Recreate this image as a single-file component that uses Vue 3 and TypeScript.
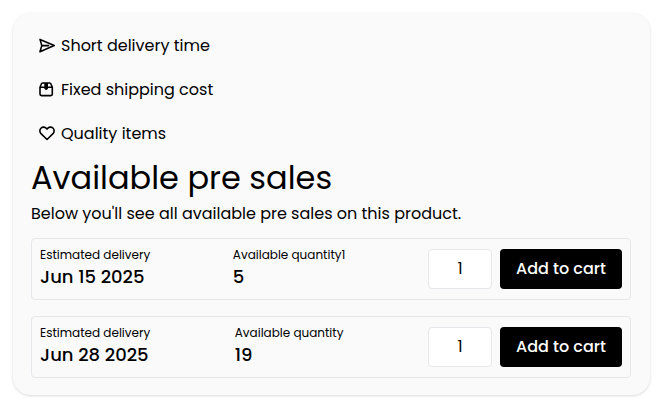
<script setup lang="ts">
import { ref } from 'vue'

interface PreSale {
  id: number
  date: string
  quantityLabel: string
  available: number
  amount: number
}

const preSales = ref<PreSale[]>([
  { id: 1, date: 'Jun 15 2025', quantityLabel: 'Available quantity1', available: 5, amount: 1 },
  { id: 2, date: 'Jun 28 2025', quantityLabel: 'Available quantity', available: 19, amount: 1 },
])
</script>

<template>
  <main class="page">
    <section class="card">
      <ul class="perks">
        <li class="perk">
          <svg class="icon" viewBox="0 0 16 16" aria-hidden="true">
            <path d="M1 1.4 15.2 7.6 1 13.8 2.8 7.6Z" />
            <path d="M2.8 7.6H9.5" />
          </svg>
          <span>Short delivery time</span>
        </li>
        <li class="perk">
          <svg class="icon" viewBox="0 0 16 16" aria-hidden="true">
            <path d="M1 5.2 2.2 2.2Q2.6 1 3.8 1H10.5Q11.7 1 12.1 2.2L13.3 5.2V12.1Q13.3 13.6 11.8 13.6H2.5Q1 13.6 1 12.1ZM1 5.2H13.3" />
            <path class="solid" d="M5.3 1H9V6.8L7.15 8.2 5.3 6.8Z" />
          </svg>
          <span>Fixed shipping cost</span>
        </li>
        <li class="perk">
          <svg class="icon" viewBox="0 0 16 16" aria-hidden="true">
            <path d="M8 13.5 2 7.7C.4 6 .5 3.5 2.1 2 3.8.5 6.4.9 8 3.1 9.6.9 12.2.5 13.9 2 15.5 3.5 15.6 6 14 7.7Z" />
          </svg>
          <span>Quality items</span>
        </li>
      </ul>

      <h1 class="title">Available pre sales</h1>
      <p class="intro">Below you'll see all available pre sales on this product.</p>

      <div class="sales">
        <form v-for="sale in preSales" :key="sale.id" class="sale" @submit.prevent>
          <div class="fact">
            <span class="label">Estimated delivery</span>
            <span class="value">{{ sale.date }}</span>
          </div>
          <div class="fact">
            <span class="label">{{ sale.quantityLabel }}</span>
            <span class="value">{{ sale.available }}</span>
          </div>
          <div class="actions">
            <input
              v-model.number="sale.amount"
              class="amount"
              type="number"
              min="1"
              :max="sale.available"
              aria-label="Quantity"
            />
            <button class="add" type="submit">Add to cart</button>
          </div>
        </form>
      </div>
    </section>
  </main>
</template>

<style>
body {
  background: #fff;
}
</style>

<style scoped>
.page {
  padding: 13px;
  color: #000;
  font-family: Poppins, Inter, "Open Sans", sans-serif;
  font-size: 16px;
  line-height: 24px;
}

.card {
  padding: 11px 19px 17px 18px;
  border-radius: 18px;
  background: #fafafa;
  box-shadow: 0 1px 3px rgb(0 0 0 / 15%);
}

.perks {
  margin: 0;
  padding: 0;
  list-style: none;
}

.perk {
  display: flex;
  align-items: center;
  gap: 6px;
  padding: 10px 8px;
}

.icon {
  width: 16px;
  height: 16px;
  fill: none;
  stroke: currentColor;
  stroke-width: 1.6;
  stroke-linecap: round;
  stroke-linejoin: round;
}

.solid {
  fill: currentColor;
  stroke: none;
}

.title {
  margin: 0 0 2px;
  font-size: 32px;
  font-weight: 400;
  line-height: 44px;
}

.intro {
  margin: 0 0 12px;
}

.sales {
  display: grid;
  gap: 16px;
}

.sale {
  display: flex;
  align-items: center;
  justify-content: space-between;
  padding: 8px;
  border: 1px solid #e5e7eb;
  border-radius: 4px;
}

.fact {
  display: flex;
  flex-direction: column;
}

.label {
  font-size: 12px;
  line-height: 16px;
}

.value {
  font-size: 18px;
  font-weight: 500;
  line-height: 28px;
}

.actions {
  display: flex;
  gap: 8px;
}

.amount,
.add {
  box-sizing: border-box;
  height: 40px;
  margin: 0;
  border-radius: 4px;
  font: inherit;
}

.amount {
  width: 64px;
  padding: 0 8px 2px;
  border: 1px solid #e5e7eb;
  background: #fff;
  color: inherit;
  text-align: center;
  appearance: textfield;
}

.amount::-webkit-inner-spin-button {
  display: none;
}

.add {
  min-width: 122px;
  padding: 0 16px;
  border: 0;
  background: #000;
  color: #fff;
  font-weight: 500;
  white-space: nowrap;
  cursor: pointer;
}
</style>
